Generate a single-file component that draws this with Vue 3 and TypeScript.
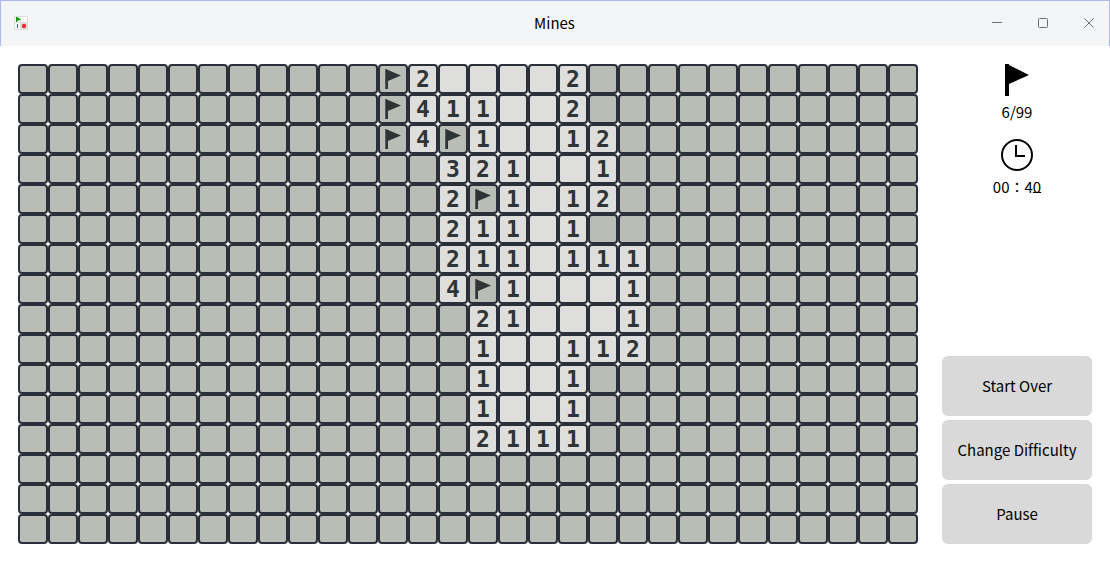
<script setup lang="ts">
type Cell = '#' | '.' | 'F' | '1' | '2' | '3' | '4'

const closedLeft = '############'
const rows: string[] = [
  closedLeft + 'F2....2###########',
  closedLeft + 'F411..2###########',
  closedLeft + 'F4F1..12##########',
  closedLeft + '##321..1##########',
  closedLeft + '##2F1.12##########',
  closedLeft + '##211.1###########',
  closedLeft + '##211.111#########',
  closedLeft + '##4F1...1#########',
  closedLeft + '###21...1#########',
  closedLeft + '###1..112#########',
  closedLeft + '###1..1###########',
  closedLeft + '###1..1###########',
  closedLeft + '###2111###########',
  closedLeft + '##################',
  closedLeft + '##################',
  closedLeft + '##################',
]
const board = rows.map((row) => row.split('') as Cell[])

const isClosed = (cell: Cell): boolean => cell === '#' || cell === 'F'
const label = (cell: Cell): string =>
  cell === 'F' ? 'Flagged' : cell === '#' ? 'Covered' : cell === '.' ? 'Empty' : cell
const actions: string[] = ['Start Over', 'Change Difficulty', 'Pause']
</script>

<template>
  <div class="window">
    <header class="titlebar">
      <svg class="app-icon" viewBox="0 0 14 14" aria-hidden="true">
        <rect width="14" height="14" rx="1" fill="#dededc" />
        <path d="M1 1h5v5H1zM7 1h6v5H7zM1 7h5v6H1z" fill="#fafafa" />
        <path d="M2 1h1l4 2.5-4 1.500V6H2z" fill="#0a9a0a" />
        <path d="M3 8h1v4H3z" fill="#3465a4" />
        <circle cx="10" cy="10" r="2.200" fill="#f22c35" />
      </svg>
      <h1 class="title">Mines</h1>
      <div class="controls">
        <button type="button" aria-label="Minimize">
          <svg viewBox="0 0 12 12"><path d="M1 5.5h10" /></svg>
        </button>
        <button type="button" aria-label="Maximize">
          <svg viewBox="0 0 12 12"><rect x="1.5" y="1.5" width="9" height="9" rx="1" /></svg>
        </button>
        <button type="button" aria-label="Close">
          <svg viewBox="0 0 12 12"><path d="M1.5 1.5l9 9M10.5 1.5l-9 9" /></svg>
        </button>
      </div>
    </header>

    <main class="content">
      <div class="board">
        <template v-for="(row, y) in board" :key="y">
          <button
            v-for="(cell, x) in row"
            :key="x"
            type="button"
            class="cell"
            :class="{ closed: isClosed(cell) }"
            :aria-label="label(cell)"
          >
            <svg v-if="cell === 'F'" class="mark" viewBox="0 0 26 26">
              <path d="M5 3h1v20H5z" fill="#555a57" />
              <path d="M6 3l2 1 13 5.500L8 15V23H6z" fill="#2e3436" />
            </svg>
            <template v-else-if="cell !== '#' && cell !== '.'">{{ cell }}</template>
          </button>
        </template>
      </div>

      <aside class="side">
        <div class="stat">
          <svg class="stat-icon" viewBox="0 0 32 32" aria-hidden="true">
            <path d="M4 0h4v1l20 10-20 9v12H4z" />
          </svg>
          <span>6/99</span>
        </div>
        <div class="stat">
          <svg class="stat-icon" viewBox="0 0 32 32" aria-hidden="true">
            <circle cx="16" cy="16" r="15" fill="none" stroke="#000" stroke-width="2" />
            <path d="M15 6v11h9" fill="none" stroke="#000" stroke-width="2" />
          </svg>
          <span>00∶4<span class="tick">0</span></span>
        </div>
        <div class="actions">
          <button v-for="action in actions" :key="action" type="button" class="action">
            {{ action }}
          </button>
        </div>
      </aside>
    </main>
  </div>
</template>

<style>
body {
  margin: 0;
  background: #fff;
}
</style>

<style scoped>
.window {
  min-height: 100vh;
  box-sizing: border-box;
  font-family: "Noto Sans CJK SC", "Noto Sans", sans-serif;
  font-size: 15px;
  color: #000;
}
button {
  font: inherit;
  color: inherit;
  padding: 0;
  border: 0;
  background: none;
}
.titlebar {
  display: grid;
  grid-template-columns: 1fr auto 1fr;
  align-items: center;
  height: 46px;
  box-sizing: border-box;
  padding: 0 14px 2px 13px;
  background: #f4f5f7;
  border: 1px solid #a9bbf0;
  border-bottom: 0;
}
.app-icon {
  width: 14px;
  height: 14px;
}
.title {
  margin: 0;
  font-size: 15px;
  font-weight: 400;
  line-height: 22px;
}
.controls {
  display: flex;
  justify-content: flex-end;
  gap: 34px;
}
.controls button,
.controls svg {
  display: block;
  width: 12px;
  height: 12px;
}
.controls svg {
  fill: none;
  stroke: #6e6f71;
}
.content {
  display: flex;
  justify-content: space-between;
  padding: 18px;
}
.board {
  display: grid;
  grid-template-columns: repeat(30, 30px);
  grid-auto-rows: 30px;
}
.cell {
  display: flex;
  align-items: center;
  justify-content: center;
  box-sizing: border-box;
  border: 2px solid #2b2f39;
  border-radius: 4px;
  background: #dededc;
  color: #2e3436;
  font-family: "DejaVu Sans Mono", monospace;
  font-size: 23px;
  font-weight: 700;
  line-height: 26px;
}
.cell.closed {
  background: #babdb6;
}
.mark {
  display: block;
  width: 26px;
  height: 26px;
}
.side {
  display: flex;
  flex-direction: column;
  align-items: center;
  width: 150px;
}
.stat {
  display: flex;
  flex-direction: column;
  align-items: center;
  gap: 5px;
  margin-bottom: 16px;
  line-height: 22px;
}
.stat-icon {
  display: block;
  width: 32px;
  height: 32px;
}
.tick {
  text-decoration: underline 1px;
  text-decoration-skip-ink: none;
  text-underline-offset: -1px;
}
.actions {
  display: flex;
  flex-direction: column;
  gap: 4px;
  width: 100%;
  margin-top: auto;
}
.action {
  height: 60px;
  padding-bottom: 2px;
  border-radius: 6px;
  background: #d9d9d9;
  font-variant-ligatures: none;
}
</style>
